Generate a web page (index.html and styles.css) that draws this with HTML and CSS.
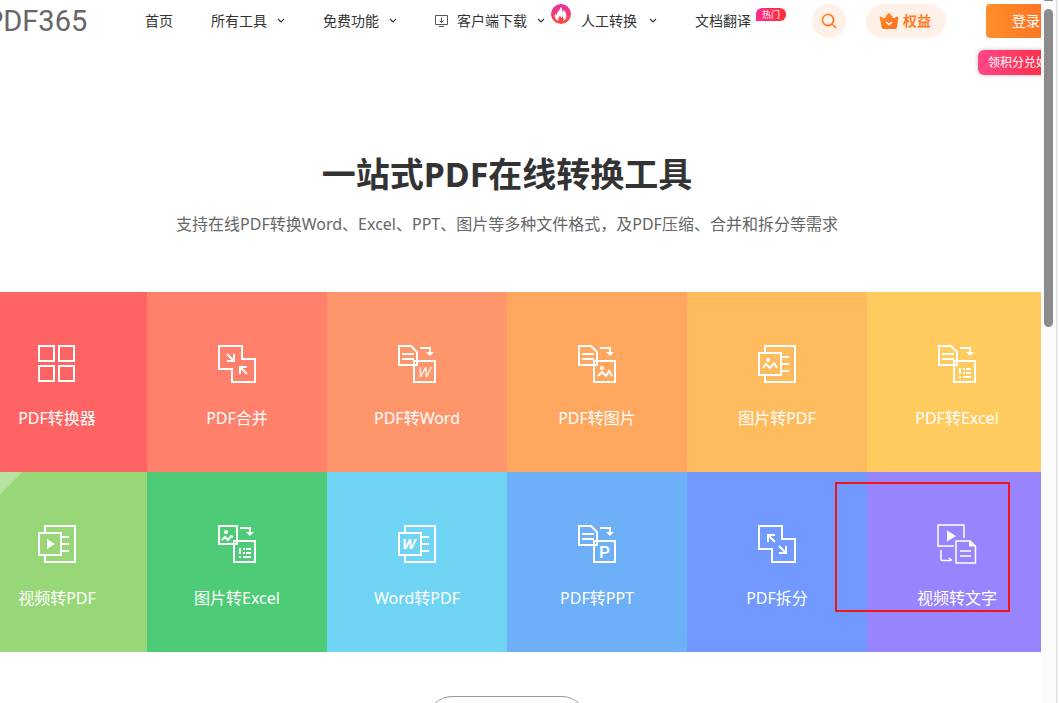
FILE: index.html
```html
<!DOCTYPE html>
<html lang="zh-CN">
<head>
<meta charset="utf-8">
<title>PDF365</title>
<link rel="stylesheet" href="styles.css">
</head>
<body>
<svg class="defs" aria-hidden="true">
  <defs>
    <linearGradient id="orange" x1="0" y1="0" x2="1" y2="1"><stop offset="0" stop-color="#ff922b"/><stop offset="1" stop-color="#ff6b1f"/></linearGradient>
    <linearGradient id="fire" x1="0" y1="0" x2="0" y2="1"><stop offset="0" stop-color="#e331a8"/><stop offset="1" stop-color="#ff4a3a"/></linearGradient>
    <symbol id="chev" viewBox="0 0 8 8"><path d="M1 2l3 3 3-3" fill="none" stroke="#333" stroke-width="1.1"/></symbol>
    <symbol id="doc-arrow" viewBox="0 0 40 40"><path d="M2 2H14L20 8V21H2ZM5 10H17M5 15H17"/></symbol>
    <symbol id="arrow" viewBox="0 0 40 40"><path d="M23 4H33V8"/><path class="solid" d="M29 8h8l-4 4z"/></symbol>
    <symbol id="sheet" viewBox="0 0 40 40"><path d="M8 9V2H38V38H8V31M25 13H32M25 20H32M25 27H32"/><rect x="2" y="9" width="22" height="22"/></symbol>
    <symbol id="table" viewBox="0 0 40 40"><rect x="17" y="17" width="21" height="21"/><path d="M23 24V30M23 32V34M26 25H28M29 25H34M26 29H28M29 29H34M26 33H34"/></symbol>
  </defs>
</svg>
<div class="window">
  <div class="viewport">
    <div class="page">
      <header class="header">
        <a class="logo" href="#">PDF365</a>
        <nav class="nav">
          <a href="#">首页</a>
          <a href="#">所有工具<svg class="chev"><use href="#chev"/></svg></a>
          <a href="#">免费功能<svg class="chev"><use href="#chev"/></svg></a>
          <a class="client" href="#"><svg class="monitor" viewBox="0 0 14 14" fill="none" stroke="#555"><path d="M.5 1.500h12v9H.5zM4 12.500h5M6.500 3.500v5M4.500 6.500l2 2 2-2"/></svg>客户端下载<svg class="chev"><use href="#chev"/></svg></a>
          <a class="manual" href="#"><svg class="fire" viewBox="0 0 20 20"><circle cx="10" cy="10" r="10" fill="url(#fire)"/><path fill="#fff" d="M7.500 17C4 15.500 3 12.500 4.200 9.600c.3 1 .7 1.600 1.400 2C5.500 8.500 8.500 6.500 10 3c1.300 2 1.600 3.500 1.400 5.200.8-.4 1.400-1.200 1.600-2.200 2.600 3 4 8.500-.7 11 .8-2 .3-3.500-.9-4.800-.3 1-.7 1.500-1.300 1.800-.2-1.200-.6-2-1.300-2.700C8.800 13.500 6.500 14.500 7.500 17z"/></svg>人工转换<svg class="chev wide"><use href="#chev"/></svg></a>
          <a class="translate" href="#">文档翻译<span class="hot">热门</span></a>
        </nav>
        <button class="search" type="button" aria-label="搜索"><svg viewBox="0 0 16 16" width="16" height="16" fill="none" stroke="url(#orange)" stroke-width="1.700"><circle cx="7" cy="7" r="5.600"/><path d="M11 11l4 4"/></svg></button>
        <a class="rights" href="#"><svg viewBox="0 0 20 16" width="20" height="16"><path fill="url(#orange)" d="M.6 4.200q.4-1 1.400-.5L5.500 5.300 8.600 1Q10-.8 11.400 1l3.100 4.300L18 3.700q1.500-.4 1.500 1L18 14q-.3 2-2 2H4.500q-1.700 0-2-2z"/><path fill="none" stroke="#fff" stroke-width="1.500" d="M7 9l3 2.500L13 9"/></svg>权益</a>
        <div class="account">
          <button class="login" type="button">登录</button>
          <span class="bubble">领积分兑好礼</span>
        </div>
      </header>

      <main>
        <section class="hero">
          <h1>一站式PDF在线转换工具</h1>
          <p>支持在线PDF转换Word、Excel、PPT、图片等多种文件格式，及PDF压缩、合并和拆分等需求</p>
        </section>

        <section class="tiles">
          <a class="tile red" href="#"><svg class="icon" viewBox="0 0 40 40"><path d="M2 2H17V17H2ZM22 2H37V17H22ZM2 22H17V37H2ZM22 22H37V37H22Z"/></svg>PDF转换器</a>
          <a class="tile coral" href="#"><svg class="icon" viewBox="0 0 40 40"><path d="M2 2H25V15H38V38H15V25H2ZM10 10L17 17M17 10V17H10M30 30L23 23M23 30V23H30"/></svg>PDF合并</a>
          <a class="tile salmon" href="#"><svg class="icon" viewBox="0 0 40 40"><use href="#doc-arrow"/><use href="#arrow"/><rect x="17" y="17" width="21" height="21"/><text x="21" y="33">W</text></svg>PDF转Word</a>
          <a class="tile orange" href="#"><svg class="icon" viewBox="0 0 40 40"><use href="#doc-arrow"/><use href="#arrow"/><rect x="17" y="17" width="21" height="21"/><circle class="solid" cx="25" cy="24" r="2"/><path d="M21 32l4-4 4 4 3-5 3 5"/></svg>PDF转图片</a>
          <a class="tile amber" href="#"><svg class="icon" viewBox="0 0 40 40"><use href="#sheet"/><circle class="solid" cx="11" cy="16" r="2"/><path d="M6 24l3-4 4 4 4-5 3 5"/></svg>图片转PDF</a>
          <a class="tile yellow" href="#"><svg class="icon" viewBox="0 0 40 40"><use href="#doc-arrow"/><use href="#arrow"/><use href="#table"/></svg>PDF转Excel</a>
          <a class="tile lime corner" href="#"><svg class="icon" viewBox="0 0 40 40"><use href="#sheet"/><path class="solid" d="M10 15l8 5-8 5z"/></svg>视频转PDF</a>
          <a class="tile green" href="#"><svg class="icon" viewBox="0 0 40 40"><rect x="2" y="2" width="18" height="18"/><circle class="solid" cx="9" cy="8" r="2"/><path d="M5 16l3-3 3 3 3-4 2 1"/><use href="#arrow"/><use href="#table"/></svg>图片转Excel</a>
          <a class="tile cyan" href="#"><svg class="icon" viewBox="0 0 40 40"><use href="#sheet"/><text class="heavy" x="5" y="25">W</text></svg>Word转PDF</a>
          <a class="tile sky" href="#"><svg class="icon" viewBox="0 0 40 40"><use href="#doc-arrow"/><use href="#arrow"/><rect x="17" y="17" width="21" height="21"/><text class="upright" x="22" y="34">P</text></svg>PDF转PPT</a>
          <a class="tile blue" href="#"><svg class="icon" viewBox="0 0 40 40"><path d="M2 2H25V15H38V38H15V25H2ZM18 18L11 11M11 18V11H18M22 22L29 29M29 22V29H22"/></svg>PDF拆分</a>
          <a class="tile violet" href="#"><svg class="icon thin" viewBox="0 0 40 40"><path d="M17 22H1V1H27V14M4 26V35q0 1.500 1.500 1.500H14M12 34l3 2.500M19 17H33L38.500 22V39H19ZM23 27H34M23 32H34"/><path class="solid" d="M10 6.500l9 5.500-9 5.500zM32 16.500l7 6h-7z"/></svg>视频转文字</a>
          <span class="marker"></span>
        </section>
        <button class="more" type="button" aria-label="更多工具"></button>
      </main>
    </div>
  </div>
  <div class="scrollbar"><span class="cap"></span><span class="thumb"></span></div>
</div>
</body>
</html>
```
FILE: styles.css
```css
* {
  box-sizing: border-box;
}

body {
  margin: 0;
  background: #fff;
  color: #333;
  font: 14px/20px "Noto Sans", "Noto Sans CJK SC", sans-serif;
}

a {
  color: inherit;
  text-decoration: none;
}

button {
  border: 0;
  font: inherit;
  cursor: pointer;
}

.defs {
  position: absolute;
  width: 0;
  height: 0;
}

.window {
  display: flex;
  height: 100vh;
  overflow: hidden;
}

.viewport {
  flex: 1;
  min-width: 0;
  overflow: hidden;
}

/* The page is wider than the viewport and scrolled slightly to the right. */
.page {
  min-width: 1080px;
  margin-left: -33px;
}

.header {
  display: flex;
  align-items: center;
  height: 42px;
  padding-left: 18px;
}

.header > * {
  flex: none;
}

.logo {
  width: 103px;
  color: #666;
  font: 400 29px/42px Roboto, sans-serif;
}

.nav {
  display: flex;
  align-items: center;
  margin-left: 57px;
}

.nav a {
  display: flex;
  align-items: center;
  margin-right: 38px;
  white-space: nowrap;
}

.chev {
  width: 8px;
  height: 8px;
  margin-left: 10px;
}

.chev.wide {
  margin-left: 12px;
}

.monitor {
  width: 14px;
  height: 14px;
  margin-right: 8px;
}

.nav .client {
  margin-right: 6px;
}

.fire {
  width: 20px;
  height: 20px;
  margin: 0 10px 14px 0;
}

.nav .translate {
  margin-right: 26px;
}

.hot {
  width: 30px;
  margin: 0 0 14px 5px;
  border-radius: 6px 6px 6px 0;
  background: linear-gradient(90deg, #ff2a8a, #ff3030);
  color: #fff;
  font-size: 9px;
  line-height: 13px;
  text-align: center;
}

.search {
  display: flex;
  align-items: center;
  justify-content: center;
  width: 34px;
  height: 34px;
  padding: 0;
  border-radius: 50%;
  background: #fff1e7;
}

.rights {
  display: flex;
  align-items: center;
  gap: 4px;
  height: 34px;
  margin: 0 40px 0 20px;
  padding: 0 15px 0 13px;
  border-radius: 17px;
  background: #fff1e7;
  color: #ff7a22;
  font-weight: 700;
  white-space: nowrap;
}

.account {
  position: relative;
}

.login {
  height: 34px;
  padding: 0 26px;
  border-radius: 4px;
  background: linear-gradient(90deg, #ff8e2a, #ff6a22);
  color: #fff;
  white-space: nowrap;
}

.bubble {
  position: absolute;
  top: 46px;
  left: -8px;
  padding: 0 10px;
  border-radius: 6px 0 6px 6px;
  background: linear-gradient(90deg, #ff4788, #ff3048 70%);
  box-shadow: 0 0 4px #bbb;
  color: #fff;
  font-size: 12px;
  line-height: 25px;
  white-space: nowrap;
}

.hero {
  padding: 108px 0 56px;
  text-align: center;
}

.hero h1 {
  margin: 0;
  font-size: 34px;
  line-height: 48px;
}

.hero p {
  margin: 14px 0 0;
  color: #666;
  font-size: 16px;
  line-height: 24px;
}

.tiles {
  position: relative;
  display: grid;
  grid-template-columns: repeat(6, 1fr);
}

.tile {
  display: flex;
  flex-direction: column;
  align-items: center;
  gap: 22px;
  padding: 52px 0 42px;
  color: #fff;
  font-size: 16px;
  line-height: 24px;
}

.icon {
  width: 40px;
  height: 40px;
  fill: none;
  stroke: #fff;
  stroke-width: 2;
}

.icon.thin {
  stroke-width: 1.5;
}

.solid {
  fill: #fff;
  stroke: none;
}

.icon text {
  fill: #fff;
  stroke: none;
  font: italic 500 15px "Open Sans", sans-serif;
}

.icon .heavy {
  font-weight: 700;
}

.icon .upright {
  font: 500 17px Roboto, sans-serif;
}

.red { background: #ff6464; }
.coral { background: #ff816b; }
.salmon { background: #ff966b; }
.orange { background: #ffa75e; }
.amber { background: #ffbc5e; }
.yellow { background: #ffcb5e; }
.lime { background: #97d777; }
.green { background: #4ecb77; }
.cyan { background: #6fd4f4; }
.sky { background: #6db0f7; }
.blue { background: #7199ff; }
.violet { background: #9884ff; }

.corner {
  background: linear-gradient(135deg, #b7e2a0 39px, #97d777 39px);
}

.marker {
  position: absolute;
  top: 190px;
  right: 37px;
  width: 175px;
  height: 130px;
  border: 2px solid #ee1418;
  pointer-events: none;
}

.more {
  display: block;
  width: 160px;
  height: 50px;
  margin: 44px auto 0;
  border: 1px solid #999;
  border-radius: 25px;
  background: #fff;
}

.scrollbar {
  display: flex;
  flex: none;
  flex-direction: column;
  align-items: center;
  gap: 8px;
  width: 18px;
  padding-right: 1px;
  border-right: 2px solid #f6f6f6;
  background: linear-gradient(90deg, #fcfcfc 15px, #ddd 15px);
}

.cap {
  width: 9px;
  height: 1px;
  background: #8b8b8b;
}

.thumb {
  width: 9px;
  height: 318px;
  border-radius: 5px;
  background: #8b8b8b;
}
```
